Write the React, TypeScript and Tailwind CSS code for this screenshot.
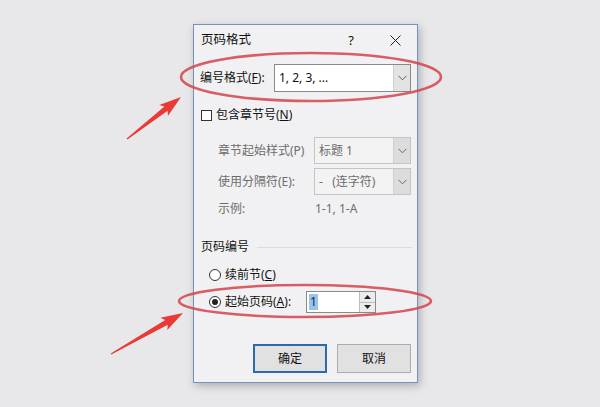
import React from "react";

const FONT = { fontFamily: '"Noto Sans", "Noto Sans CJK SC", sans-serif' };

function arrowPoints(tx: number, ty: number, hx: number, hy: number) {
  const dx = hx - tx;
  const dy = hy - ty;
  const len = Math.hypot(dx, dy);
  const ux = dx / len;
  const uy = dy / len;
  const nx = -uy;
  const ny = ux;
  const headLen = 19;
  const bx = hx - ux * headLen;
  const by = hy - uy * headLen;
  const wx = hx - ux * (headLen + 3);
  const wy = hy - uy * (headLen + 3);
  const pts: [number, number][] = [
    [tx + nx * 0.6, ty + ny * 0.6],
    [bx + nx * 2.6, by + ny * 2.6],
    [wx + nx * 7, wy + ny * 7],
    [hx, hy],
    [wx - nx * 7, wy - ny * 7],
    [bx - nx * 2.6, by - ny * 2.6],
    [tx - nx * 0.6, ty - ny * 0.6],
  ];
  return pts.map((p) => p.map((v) => v.toFixed(1)).join(",")).join(" ");
}

function Chevron({ color = "#606060" }: { color?: string }) {
  return (
    <svg width="9" height="6" viewBox="0 0 9 6">
      <path d="M0.5 0.8 L4.5 4.8 L8.5 0.8" fill="none" stroke={color} strokeWidth="1" />
    </svg>
  );
}

function Combo({
  text,
  width,
  height,
  disabled,
}: {
  text: string;
  width: string;
  height: string;
  disabled?: boolean;
}) {
  return (
    <div
      className={`flex ${width} ${height} border ${
        disabled ? "border-[#c4c4c4] bg-[#f3f3f3] text-[#6d6d6d]" : "border-[#8a8a8a] bg-white text-[#111]"
      }`}
    >
      <div className="flex flex-1 items-center pl-[4px] text-[12px] whitespace-pre">{text}</div>
      <div
        className={`flex w-[17px] items-center justify-center border-l ${
          disabled ? "border-[#d0d0d0] bg-[#dcdcdc]" : "border-[#cfcfcf] bg-[#e3e3e3]"
        }`}
      >
        <Chevron color={disabled ? "#6a6a6a" : "#5a5a5a"} />
      </div>
    </div>
  );
}

function Radio({ checked }: { checked?: boolean }) {
  return (
    <div className="flex h-[12px] w-[12px] items-center justify-center rounded-full border border-[#333] bg-white">
      {checked && <div className="h-[6px] w-[6px] rounded-full bg-[#222]" />}
    </div>
  );
}

export default function App() {
  return (
    <div className="relative h-[407px] w-[600px] overflow-hidden bg-[#e8e8ea]" style={FONT}>
      <div className="pl-[193px] pt-[24px]">
        <div className="flex h-[359px] w-[225px] flex-col border border-[#7593b8] bg-[#f1f1f3] shadow-[2px_3px_8px_rgba(60,70,90,0.35)]">
          {/* title bar */}
          <div className="flex h-[31px] shrink-0 items-center pl-[7px] text-[12.5px] text-[#111]">
            <span>页码格式</span>
            <span className="ml-[94px] w-[12px] text-center text-[13px]">?</span>
            <span className="ml-[32px] flex w-[12px] items-center justify-center">
              <svg width="11" height="11" viewBox="0 0 11 11">
                <path d="M0.5 0.5 L10.5 10.5 M10.5 0.5 L0.5 10.5" stroke="#222" strokeWidth="1" />
              </svg>
            </span>
          </div>

          {/* row 1 */}
          <div className="mt-[8px] flex h-[28px] items-center pl-[6px] pr-[5px] text-[12px] text-[#111]">
            <span className="w-[74px]">
              编号格式(<span className="underline">F</span>):
            </span>
            <Combo text="1, 2, 3, ..." width="w-[137px]" height="h-[28px]" />
          </div>

          {/* checkbox */}
          <div className="mt-[14px] flex h-[18px] items-center pl-[7px] text-[12px] text-[#111]">
            <div className="h-[11px] w-[11px] border border-[#333] bg-white" />
            <span className="ml-[4px]">
              包含章节号(<span className="underline">N</span>)
            </span>
          </div>

          {/* row 2 */}
          <div className="mt-[13px] flex h-[27px] items-center pl-[24px] text-[12px] text-[#6d6d6d]">
            <span className="w-[96px]">章节起始样式(P)</span>
            <Combo text="标题 1" width="w-[97px]" height="h-[27px]" disabled />
          </div>

          {/* row 3 */}
          <div className="mt-[4px] flex h-[27px] items-center pl-[24px] text-[12px] text-[#6d6d6d]">
            <span className="w-[96px]">使用分隔符(E):</span>
            <Combo text={"-   (连字符)"} width="w-[97px]" height="h-[27px]" disabled />
          </div>

          {/* example */}
          <div className="mt-[6px] flex h-[16px] items-center pl-[24px] text-[12px] text-[#6d6d6d]">
            <span className="w-[96px]">示例:</span>
            <span className="pl-[1px]">1-1, 1-A</span>
          </div>

          {/* section */}
          <div className="mt-[22px] flex h-[16px] items-center pl-[7px] pr-[5px] text-[12px] text-[#111]">
            <span>页码编号</span>
            <div className="ml-[8px] h-px flex-1 bg-[#dcdcdc]" />
          </div>

          {/* radio 1 */}
          <div className="mt-[12px] flex h-[16px] items-center pl-[15px] text-[12px] text-[#111]">
            <Radio />
            <span className="ml-[4px]">
              续前节(<span className="underline">C</span>)
            </span>
          </div>

          {/* radio 2 */}
          <div className="mt-[8px] flex h-[22px] items-center pl-[15px] text-[12px] text-[#111]">
            <Radio checked />
            <span className="ml-[4px] w-[81px]">
              起始页码(<span className="underline">A</span>):
            </span>
            <div className="flex h-[22px] w-[70px] border border-[#8a8a8a] bg-white">
              <div className="flex flex-1 items-center pl-[2px]">
                <span className="bg-[#99c4ea] px-[1px] leading-[16px] text-[#0a2a55]">1</span>
              </div>
              <div className="flex w-[16px] flex-col border-l border-[#bcbcbc]">
                <div className="flex flex-1 items-center justify-center border-b border-[#bcbcbc] bg-[#ececec]">
                  <svg width="7" height="4" viewBox="0 0 7 4">
                    <path d="M0 4 L3.5 0 L7 4 Z" fill="#222" />
                  </svg>
                </div>
                <div className="flex flex-1 items-center justify-center bg-[#ececec]">
                  <svg width="7" height="4" viewBox="0 0 7 4">
                    <path d="M0 0 L3.5 4 L7 0 Z" fill="#222" />
                  </svg>
                </div>
              </div>
            </div>
          </div>

          {/* buttons */}
          <div className="mt-[31px] flex h-[29px] justify-end gap-[10px] pr-[6px] text-[12px] text-[#111]">
            <div className="flex w-[74px] items-center justify-center border-2 border-[#2d6aa8] bg-[#e1e1e1]">
              确定
            </div>
            <div className="flex w-[74px] items-center justify-center border border-[#adadad] bg-[#e1e1e1]">
              取消
            </div>
          </div>
        </div>
      </div>

      {/* annotations overlay */}
      <svg className="pointer-events-none absolute left-0 top-0" width="600" height="407" viewBox="0 0 600 407">
        <ellipse cx="311" cy="77" rx="130" ry="24" fill="none" stroke="#d4434a" strokeOpacity="0.85" strokeWidth="2.6" />
        <ellipse cx="305" cy="301" rx="126" ry="16" fill="none" stroke="#d4434a" strokeOpacity="0.85" strokeWidth="2.6" />
        <polygon points={arrowPoints(127, 139, 181, 97)} fill="#ea3a35" />
        <polygon points={arrowPoints(111, 354, 183, 313)} fill="#ea3a35" />
      </svg>
    </div>
  );
}
